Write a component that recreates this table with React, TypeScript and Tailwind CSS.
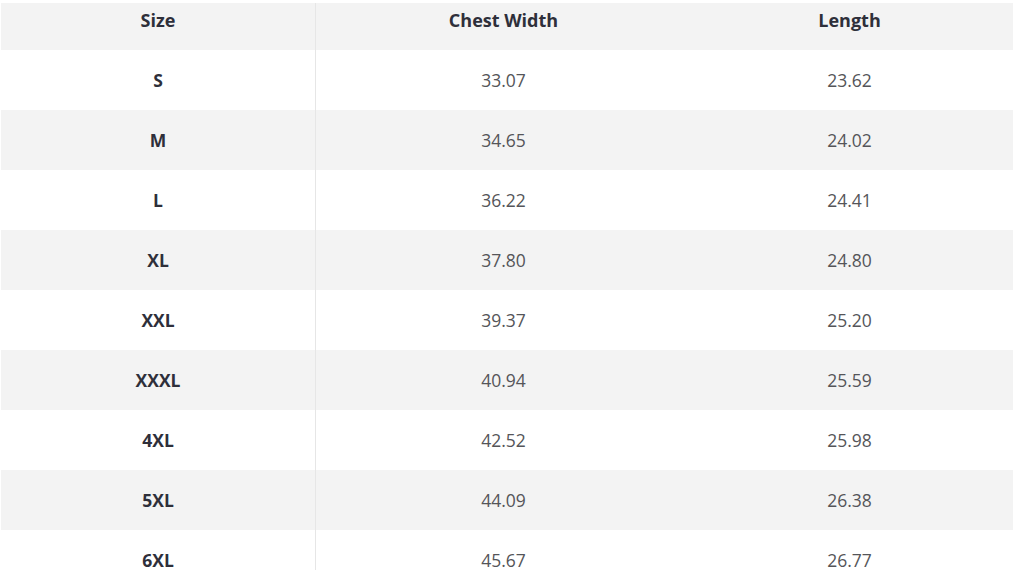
import { clsx } from 'clsx'

const rows = [
  ['S', '33.07', '23.62'],
  ['M', '34.65', '24.02'],
  ['L', '36.22', '24.41'],
  ['XL', '37.80', '24.80'],
  ['XXL', '39.37', '25.20'],
  ['XXXL', '40.94', '25.59'],
  ['4XL', '42.52', '25.98'],
  ['5XL', '44.09', '26.38'],
  ['6XL', '45.67', '26.77'],
]

export default function App() {
  return (
    <div
      className="w-[1013px] h-[570px] overflow-hidden bg-white pt-[3px] pl-px"
      style={{ fontFamily: '"Open Sans", "Noto Sans", sans-serif' }}
    >
      {/* Header */}
      <div className="grid grid-cols-[315px_375px_317px] h-[47px] bg-[#f3f3f3] text-[18px] font-bold text-[#2e2f3a]">
        <div className="flex justify-center pt-[4px] border-r border-[#e6e6e6]">Size</div>
        <div className="flex justify-center pt-[4px]">Chest Width</div>
        <div className="flex justify-center pt-[4px]">Length</div>
      </div>

      {/* Rows */}
      {rows.map(([size, chest, length], i) => (
        <div
          key={size}
          className={clsx(
            'grid grid-cols-[315px_375px_317px] h-[60px] items-stretch text-[17.5px]',
            i % 2 === 1 ? 'bg-[#f3f3f3]' : 'bg-white'
          )}
        >
          <div className="flex items-center justify-center border-r border-[#e6e6e6] font-bold text-[#2e2f3a]">
            {size}
          </div>
          <div className="flex items-center justify-center text-[#555559]">{chest}</div>
          <div className="flex items-center justify-center text-[#555559]">{length}</div>
        </div>
      ))}
    </div>
  )
}
